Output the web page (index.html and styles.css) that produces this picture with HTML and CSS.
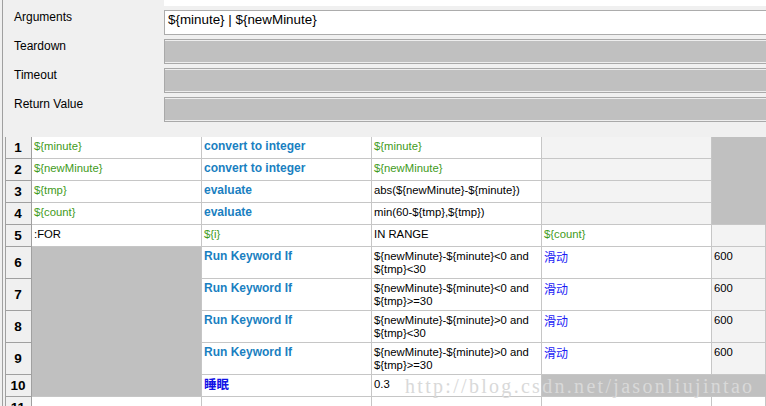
FILE: index.html
```html
<!DOCTYPE html>
<html>
<head>
<meta charset="utf-8">
<link rel="stylesheet" href="styles.css">
</head>
<body>
<div class="app">
  <div class="strip"></div>
  <div class="settings">
    <div class="label">Arguments</div>
    <div class="field field-edit">${minute} | ${newMinute}</div>
    <div class="label">Teardown</div>
    <div class="field field-off"></div>
    <div class="label">Timeout</div>
    <div class="field field-off"></div>
    <div class="label">Return Value</div>
    <div class="field field-off"></div>
  </div>

  <div class="grid">
    <div class="fill-gray span-c5"></div>
    <div class="fill-gray span-c1"></div>
    <div class="fill-gray span-r10"></div>

    <div class="hdr">1</div>
    <div class="cell var">${minute}</div>
    <div class="cell kw">convert to integer</div>
    <div class="cell var">${minute}</div>
    <div class="cell light"></div>

    <div class="hdr">2</div>
    <div class="cell var">${newMinute}</div>
    <div class="cell kw">convert to integer</div>
    <div class="cell var">${newMinute}</div>
    <div class="cell light"></div>

    <div class="hdr">3</div>
    <div class="cell var">${tmp}</div>
    <div class="cell kw">evaluate</div>
    <div class="cell">abs(${newMinute}-${minute})</div>
    <div class="cell light"></div>

    <div class="hdr">4</div>
    <div class="cell var">${count}</div>
    <div class="cell kw">evaluate</div>
    <div class="cell">min(60-${tmp},${tmp})</div>
    <div class="cell light"></div>

    <div class="hdr">5</div>
    <div class="cell">:FOR</div>
    <div class="cell var">${i}</div>
    <div class="cell">IN RANGE</div>
    <div class="cell var">${count}</div>
    <div class="cell light"></div>

    <div class="hdr">6</div>
    <div class="cell kw">Run Keyword If</div>
    <div class="cell">${newMinute}-${minute}&lt;0 and<br>${tmp}&lt;30</div>
    <div class="cell cn">滑动</div>
    <div class="cell light">600</div>

    <div class="hdr">7</div>
    <div class="cell kw">Run Keyword If</div>
    <div class="cell">${newMinute}-${minute}&lt;0 and<br>${tmp}&gt;=30</div>
    <div class="cell cn">滑动</div>
    <div class="cell light">600</div>

    <div class="hdr">8</div>
    <div class="cell kw">Run Keyword If</div>
    <div class="cell">${newMinute}-${minute}&gt;0 and<br>${tmp}&lt;30</div>
    <div class="cell cn">滑动</div>
    <div class="cell light">600</div>

    <div class="hdr">9</div>
    <div class="cell kw">Run Keyword If</div>
    <div class="cell">${newMinute}-${minute}&gt;0 and<br>${tmp}&gt;=30</div>
    <div class="cell cn">滑动</div>
    <div class="cell light">600</div>

    <div class="hdr">10</div>
    <div class="cell cn-kw">睡眠</div>
    <div class="cell">0.3</div>

    <div class="hdr">11</div>
    <div class="cell"></div>
    <div class="cell"></div>
    <div class="cell"></div>
    <div class="cell"></div>
    <div class="cell"></div>
  </div>

  <div class="watermark">http://blog.csdn.net/jasonliujintao</div>
</div>
</body>
</html>
```

FILE: styles.css
```css
* { box-sizing: border-box; }

html, body {
  margin: 0;
  padding: 0;
  width: 766px;
  height: 406px;
  overflow: hidden;
  background: #f0f0f0;
  font-family: "Liberation Sans", Arial, sans-serif;
}

.app {
  position: relative;
  margin-left: 2px;
  border-left: 1px solid #a0a0a0;
  height: 406px;
  overflow: hidden;
}

.strip {
  height: 6px;
  margin-left: 161px;
  margin-bottom: 4px;
  background: #ffffff;
}

.settings {
  display: grid;
  grid-template-columns: 161px 1fr;
  grid-auto-rows: 25px;
  row-gap: 4px;
  margin-bottom: 15px;
}

.label {
  padding-left: 11px;
  font-size: 12px;
  line-height: 14px;
  color: #000;
}

.field {
  margin-right: -10px;
  border: 1px solid #a9a9a9;
  border-right: none;
}

.field-edit {
  background: #ffffff;
  border-color: #acacac;
  padding: 1px 3px;
  font-size: 13.4px;
  line-height: 16px;
  color: #000;
  white-space: nowrap;
}

.field-off {
  background: #c0c0c0;
  box-shadow: inset 0 1px 0 #eeeeee, inset 0 -1px 0 #eeeeee;
}

.grid {
  display: grid;
  margin-left: 2px;
  border-left: 1px solid #a0a0a0;
  grid-template-columns: 26px 170px 170px 170px 170px 1fr;
  grid-template-rows: repeat(5, 22px) repeat(4, 32px) 22px 22px;
  background: #ffffff;
}

.hdr {
  background: #f0f0f0;
  border-right: 1px solid #a0a0a0;
  border-bottom: 1px solid #a0a0a0;
  font-weight: bold;
  font-size: 13.5px;
  color: #000;
  display: flex;
  align-items: center;
  justify-content: center;
  padding-right: 1px;
}

.cell {
  background: #ffffff;
  border-right: 1px solid #c6c6c6;
  border-bottom: 1px solid #c6c6c6;
  padding: 3px 2px 0 2px;
  font-size: 11.3px;
  line-height: 13px;
  color: #000;
  white-space: nowrap;
  overflow: hidden;
}

.light { background: #f3f3f3; }

.var { color: #3f9b22; }

.kw {
  color: #1a7fc1;
  font-weight: bold;
  font-size: 12px;
  padding-top: 2px;
  line-height: 14px;
}

.cn {
  color: #1c1cf5;
  font-family: "Noto Sans CJK SC", sans-serif;
  font-size: 12px;
  line-height: 13px;
}

.cn-kw {
  color: #1212e6;
  font-family: "Noto Sans CJK SC", sans-serif;
  font-weight: bold;
  font-size: 12.5px;
  line-height: 14px;
  padding-top: 2px;
}

.fill-gray {
  background: #c0c0c0;
  border-right: 1px solid #c0c0c0;
  border-bottom: 1px solid #c6c6c6;
}

.span-c5 { grid-column: 6; grid-row: 1 / 5; }
.span-c1 { grid-column: 2; grid-row: 6 / 11; border-right-color: #c6c6c6; }
.span-r10 { grid-column: 5 / 7; grid-row: 10; }

.watermark {
  position: absolute;
  left: 402px;
  top: 374px;
  font-family: "Liberation Serif", serif;
  font-size: 20px;
  line-height: 24px;
  letter-spacing: 2.3px;
  color: #d9d9d9;
  white-space: nowrap;
  pointer-events: none;
}
```
